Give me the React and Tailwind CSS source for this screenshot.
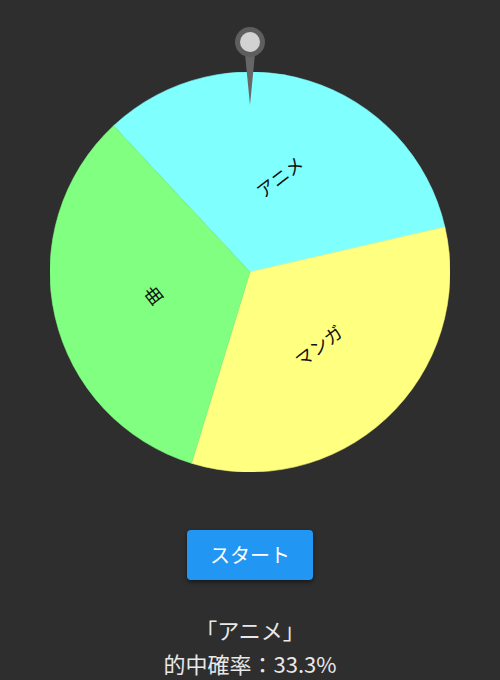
import React from "react";

const items = [
  { label: "アニメ", color: "#80ffff" },
  { label: "マンガ", color: "#ffff80" },
  { label: "曲", color: "#80ff80" },
];

// wheel geometry, angles clockwise from 12 o'clock
const R = 200;
const OFFSET = -43;

const point = (deg, r) => {
  const a = (deg * Math.PI) / 180;
  return [R + r * Math.sin(a), R - r * Math.cos(a)];
};

const Wheel = () => {
  const step = 360 / items.length;
  return (
    <svg width="400" height="400" viewBox="0 0 400 400">
      {items.map((item, i) => {
        const start = OFFSET + i * step;
        const [x1, y1] = point(start, R);
        const [x2, y2] = point(start + step, R);
        return (
          <path
            key={item.label}
            d={`M${R},${R} L${x1},${y1} A${R},${R} 0 0 1 ${x2},${y2} Z`}
            fill={item.color}
            stroke={item.color}
            strokeWidth="0.6"
          />
        );
      })}
      {items.map((item, i) => {
        const mid = OFFSET + i * step + step / 2;
        const [tx, ty] = point(mid, 100);
        return (
          <text
            key={item.label + "-t"}
            x={tx}
            y={ty}
            transform={`rotate(-38 ${tx} ${ty})`}
            textAnchor="middle"
            dominantBaseline="central"
            fontSize="18"
            fill="#111"
            style={{ fontFamily: '"Noto Sans CJK JP", sans-serif' }}
          >
            {item.label}
          </text>
        );
      })}
    </svg>
  );
};

const Pin = () => (
  <svg width="40" height="82" viewBox="0 0 40 82">
    <polygon points="15,28 25,28 20,79" fill="#666666" />
    <circle cx="20" cy="16" r="15" fill="#5e5e5e" />
    <circle cx="20" cy="16" r="10" fill="#d2d2d2" />
  </svg>
);

export default function App() {
  return (
    <div
      className="min-h-[680px] w-full bg-[#2e2e2e] flex flex-col items-center"
      style={{ fontFamily: '"Noto Sans CJK JP", sans-serif' }}
    >
      <div className="relative mt-[72px] w-[400px] h-[400px]">
        <Wheel />
        <div className="absolute left-1/2 -translate-x-1/2 top-[-46px]">
          <Pin />
        </div>
      </div>
      <button className="mt-[58px] h-[50px] px-[23px] rounded bg-[#2196f3] text-white text-[20px] shadow-[0_2px_4px_rgba(0,0,0,0.5)]">
        スタート
      </button>
      <div className="mt-[32px] flex flex-col items-center text-[#e8e8e8] text-[22px] leading-[34px]">
        <p>「アニメ」</p>
        <p>的中確率：33.3%</p>
      </div>
    </div>
  );
}
